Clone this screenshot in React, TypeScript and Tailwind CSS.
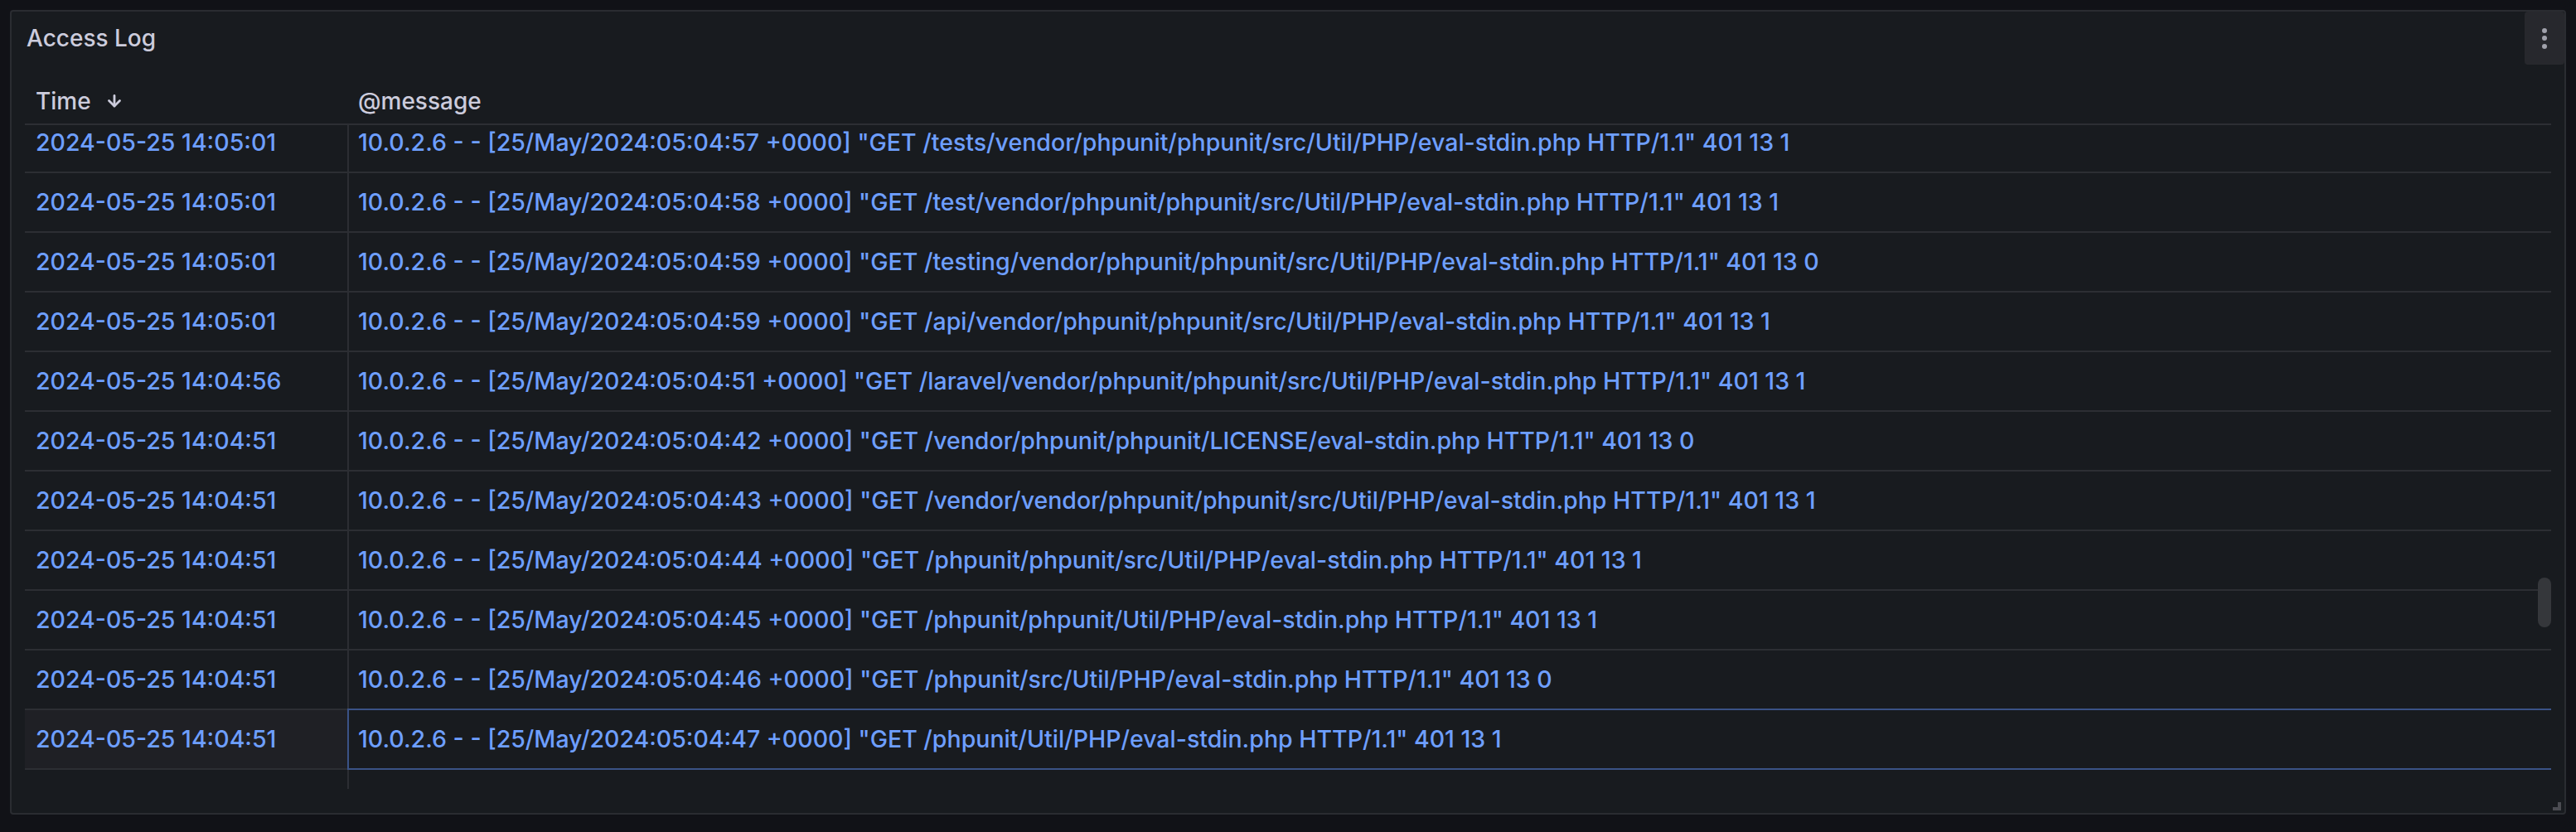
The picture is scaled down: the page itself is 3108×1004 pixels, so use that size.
import { useLayoutEffect, useRef } from 'react';

interface LogRow {
  time: string;
  message: string;
}

const rows: LogRow[] = [
  { time: '2024-05-25 14:05:01', message: '10.0.2.6 - - [25/May/2024:05:04:57 +0000] "GET /tests/vendor/phpunit/phpunit/src/Util/PHP/eval-stdin.php HTTP/1.1" 401 13 1' },
  { time: '2024-05-25 14:05:01', message: '10.0.2.6 - - [25/May/2024:05:04:58 +0000] "GET /test/vendor/phpunit/phpunit/src/Util/PHP/eval-stdin.php HTTP/1.1" 401 13 1' },
  { time: '2024-05-25 14:05:01', message: '10.0.2.6 - - [25/May/2024:05:04:59 +0000] "GET /testing/vendor/phpunit/phpunit/src/Util/PHP/eval-stdin.php HTTP/1.1" 401 13 0' },
  { time: '2024-05-25 14:05:01', message: '10.0.2.6 - - [25/May/2024:05:04:59 +0000] "GET /api/vendor/phpunit/phpunit/src/Util/PHP/eval-stdin.php HTTP/1.1" 401 13 1' },
  { time: '2024-05-25 14:04:56', message: '10.0.2.6 - - [25/May/2024:05:04:51 +0000] "GET /laravel/vendor/phpunit/phpunit/src/Util/PHP/eval-stdin.php HTTP/1.1" 401 13 1' },
  { time: '2024-05-25 14:04:51', message: '10.0.2.6 - - [25/May/2024:05:04:42 +0000] "GET /vendor/phpunit/phpunit/LICENSE/eval-stdin.php HTTP/1.1" 401 13 0' },
  { time: '2024-05-25 14:04:51', message: '10.0.2.6 - - [25/May/2024:05:04:43 +0000] "GET /vendor/vendor/phpunit/phpunit/src/Util/PHP/eval-stdin.php HTTP/1.1" 401 13 1' },
  { time: '2024-05-25 14:04:51', message: '10.0.2.6 - - [25/May/2024:05:04:44 +0000] "GET /phpunit/phpunit/src/Util/PHP/eval-stdin.php HTTP/1.1" 401 13 1' },
  { time: '2024-05-25 14:04:51', message: '10.0.2.6 - - [25/May/2024:05:04:45 +0000] "GET /phpunit/phpunit/Util/PHP/eval-stdin.php HTTP/1.1" 401 13 1' },
  { time: '2024-05-25 14:04:51', message: '10.0.2.6 - - [25/May/2024:05:04:46 +0000] "GET /phpunit/src/Util/PHP/eval-stdin.php HTTP/1.1" 401 13 0' },
  { time: '2024-05-25 14:04:51', message: '10.0.2.6 - - [25/May/2024:05:04:47 +0000] "GET /phpunit/Util/PHP/eval-stdin.php HTTP/1.1" 401 13 1' },
];

const activeRow = rows.length - 1;

export default function App() {
  const bodyRef = useRef<HTMLDivElement>(null);

  // table is scrolled a little, first row sits partly under the header
  useLayoutEffect(() => {
    if (bodyRef.current) bodyRef.current.scrollTop = 14;
  }, []);

  return (
    <div className="w-[3108px] h-[1004px] bg-[#111217] pt-[12px] pl-[12px] font-[Inter,sans-serif] text-[28px]">
      <div className="relative w-[3084px] h-[971px] bg-[#181b1f] border-2 border-[#2a2c31] rounded-[4px] flex flex-col">
        {/* panel header */}
        <div className="h-[64px] shrink-0 flex items-center pl-[18px]">
          <h2 className="text-[#ccccdc] font-medium leading-none">Access Log</h2>
        </div>
        <button className="absolute top-0 right-0 w-[48px] h-[64px] rounded-[4px] bg-[#27282d] flex flex-col items-center justify-center gap-[3.5px]">
          <span className="w-[6px] h-[6px] rounded-full bg-[#a0a1ab]" />
          <span className="w-[6px] h-[6px] rounded-full bg-[#a0a1ab]" />
          <span className="w-[6px] h-[6px] rounded-full bg-[#a0a1ab]" />
        </button>

        <div className="px-[16px] flex flex-col font-medium">
          {/* column headers */}
          <div className="flex h-[73px] pt-[16px] border-b-2 border-[#2c2e33] text-[#ccccdc]">
            <div className="w-[391px] shrink-0 pl-[13px] flex items-center">
              <span>Time</span>
              <svg width="18" height="16" viewBox="0 0 18 16" className="ml-[19px]" fill="none" stroke="#ccccdc" strokeWidth="2.8" strokeLinecap="round" strokeLinejoin="round">
                <path d="M9 1.5V14" />
                <path d="M2.5 7.5L9 14L15.5 7.5" />
              </svg>
            </div>
            <div className="flex-1 pl-[11px] flex items-center">@message</div>
          </div>

          {/* rows */}
          <div className="relative h-[801px]">
            <div ref={bodyRef} className="h-full overflow-y-auto [scrollbar-width:none] [&::-webkit-scrollbar]:hidden text-[28.5px]">
              {rows.map((row, i) => (
                <div key={i} className="flex h-[72px] border-b-2 border-[#2c2e33] text-[#6e9fff]">
                  <div className={`w-[391px] shrink-0 border-r-2 border-[#2c2e33] pl-[13px] flex items-center ${i === activeRow ? 'bg-[#1f2025]' : ''}`}>
                    {row.time}
                  </div>
                  <div className="relative flex-1 pl-[11px] flex items-center whitespace-nowrap">
                    {i === activeRow && (
                      <span className="absolute top-[-2px] bottom-[-2px] left-[-2px] right-0 border-y-2 border-l-2 border-[#3a5286]" />
                    )}
                    {row.message}
                  </div>
                </div>
              ))}
              <div className="flex h-[40px]">
                <div className="w-[391px] shrink-0 border-r-2 border-[#2c2e33]" />
              </div>
            </div>
            <div className="absolute top-[546px] right-0 w-[16px] h-[60px] rounded-full bg-[#35373b]" />
          </div>
        </div>

        {/* resize handle */}
        <svg width="10" height="10" viewBox="0 0 10 10" className="absolute right-[4px] bottom-[3px]">
          <path d="M6 0H10V10H0V6H6Z" fill="#4b4c52" />
        </svg>
      </div>
    </div>
  );
}
